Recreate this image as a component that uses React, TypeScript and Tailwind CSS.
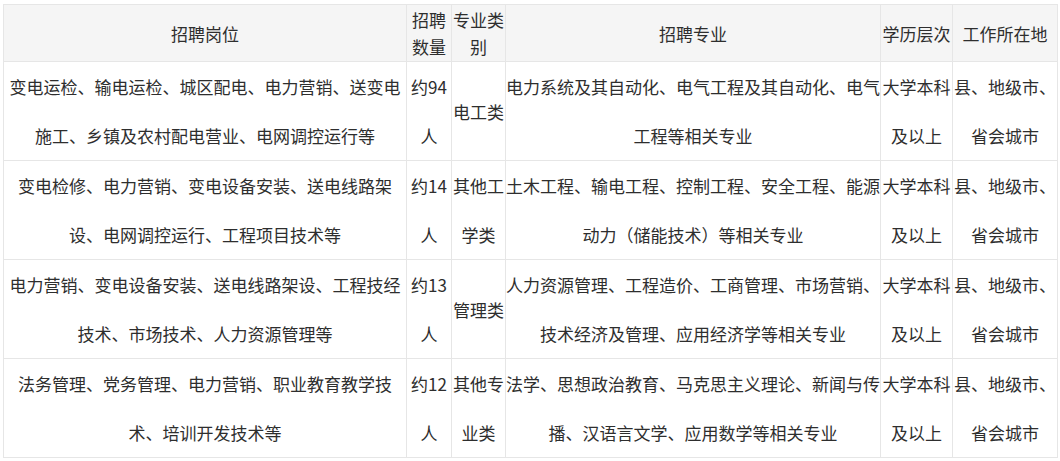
import React from "react";

type Row = {
  pos: string[];
  num: string[];
  cat: string[];
  major: string[];
  edu: string[];
  loc: string[];
};

const rows: Row[] = [
  {
    pos: ["变电运检、输电运检、城区配电、电力营销、送变电", "施工、乡镇及农村配电营业、电网调控运行等"],
    num: ["约94", "人"],
    cat: ["电工类"],
    major: ["电力系统及其自动化、电气工程及其自动化、电气", "工程等相关专业"],
    edu: ["大学本科", "及以上"],
    loc: ["县、地级市、", "省会城市"],
  },
  {
    pos: ["变电检修、电力营销、变电设备安装、送电线路架", "设、电网调控运行、工程项目技术等"],
    num: ["约14", "人"],
    cat: ["其他工", "学类"],
    major: ["土木工程、输电工程、控制工程、安全工程、能源", "动力（储能技术）等相关专业"],
    edu: ["大学本科", "及以上"],
    loc: ["县、地级市、", "省会城市"],
  },
  {
    pos: ["电力营销、变电设备安装、送电线路架设、工程技经", "技术、市场技术、人力资源管理等"],
    num: ["约13", "人"],
    cat: ["管理类"],
    major: ["人力资源管理、工程造价、工商管理、市场营销、", "技术经济及管理、应用经济学等相关专业"],
    edu: ["大学本科", "及以上"],
    loc: ["县、地级市、", "省会城市"],
  },
  {
    pos: ["法务管理、党务管理、电力营销、职业教育教学技", "术、培训开发技术等"],
    num: ["约12", "人"],
    cat: ["其他专", "业类"],
    major: ["法学、思想政治教育、马克思主义理论、新闻与传", "播、汉语言文学、应用数学等相关专业"],
    edu: ["大学本科", "及以上"],
    loc: ["县、地级市、", "省会城市"],
  },
];

function Lines({ lines }: { lines: string[] }) {
  return (
    <>
      {lines.map((l, i) => (
        <div key={i} className="whitespace-nowrap">
          {l}
        </div>
      ))}
    </>
  );
}

export default function App() {
  const td = "border border-[#e6e6e6] text-center align-middle p-0 leading-[49px]";
  const th = "border border-[#e6e6e6] text-center align-middle p-0 leading-[27px] font-normal bg-[#f5f5f5]";
  const heights = ["h-[97px]", "h-[97px]", "h-[98px]", "h-[97px]"];
  return (
    <div
      className="w-[1060px] h-[461px] bg-white pl-[3px] pt-[4px] text-[#2e2e2e] text-[17px]"
      style={{ fontFamily: '"Noto Sans CJK SC", "Noto Sans", sans-serif' }}
    >
      <table className="border-collapse table-fixed w-[1054px]">
        <colgroup>
          <col className="w-[403px]" />
          <col className="w-[45px]" />
          <col className="w-[54px]" />
          <col className="w-[375px]" />
          <col className="w-[72px]" />
          <col className="w-[105px]" />
        </colgroup>
        <thead>
          <tr className="h-[57px]">
            <th className={th}>招聘岗位</th>
            <th className={th}>
              <Lines lines={["招聘", "数量"]} />
            </th>
            <th className={th}>
              <Lines lines={["专业类", "别"]} />
            </th>
            <th className={th}>招聘专业</th>
            <th className={th}>学历层次</th>
            <th className={th}>工作所在地</th>
          </tr>
        </thead>
        <tbody>
          {rows.map((r, i) => (
            <tr key={i} className={heights[i]}>
              <td className={td}>
                <Lines lines={r.pos} />
              </td>
              <td className={td}>
                <Lines lines={r.num} />
              </td>
              <td className={td}>
                <Lines lines={r.cat} />
              </td>
              <td className={td}>
                <Lines lines={r.major} />
              </td>
              <td className={td}>
                <Lines lines={r.edu} />
              </td>
              <td className={td}>
                <Lines lines={r.loc} />
              </td>
            </tr>
          ))}
        </tbody>
      </table>
    </div>
  );
}
